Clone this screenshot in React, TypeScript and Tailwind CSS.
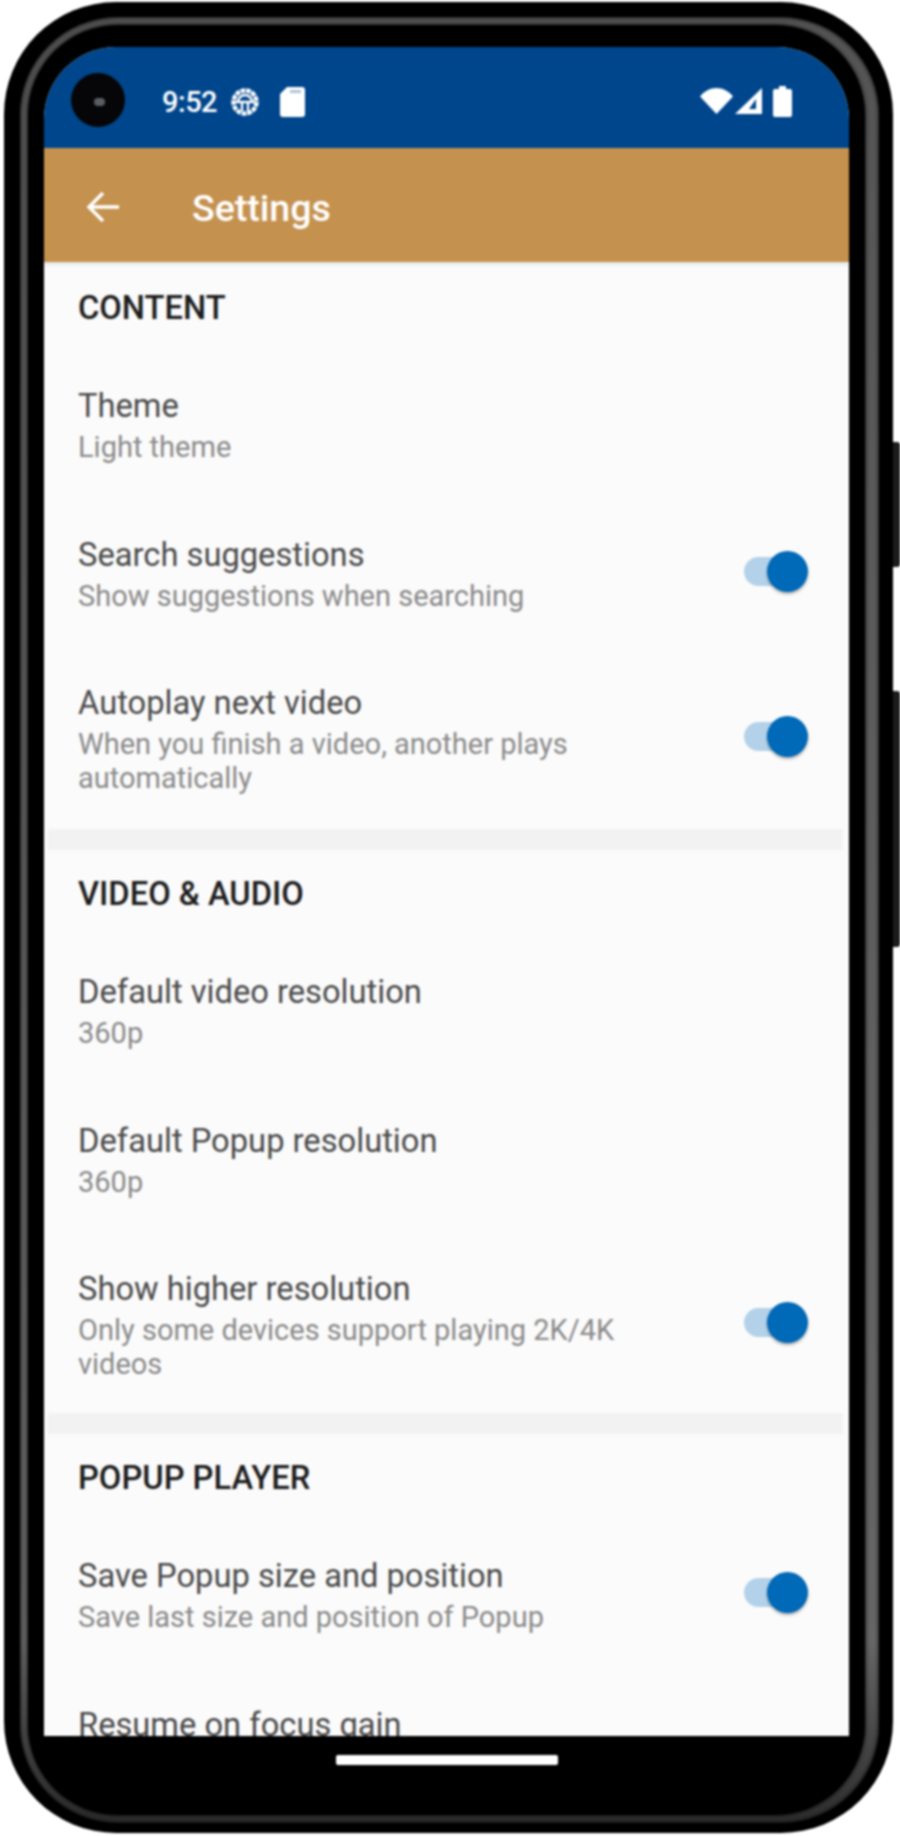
const font = "font-['Roboto','Liberation_Sans',sans-serif]";

function StatusBar() {
  return (
    <div className="flex h-[101px] shrink-0 items-center bg-[#00468c] pl-[27px] pr-[57px] text-white">
      <div className="mt-[5px] flex h-[54px] w-[54px] items-center justify-center rounded-full bg-[#060608]">
        <div className="ml-[2px] mt-[4px] h-[8px] w-[11px] rounded-full bg-[#5a5d62]" />
      </div>
      <span className="ml-[37px] mt-[10px] text-[29px] font-medium leading-none tracking-[-0.5px]">9:52</span>
      <svg className="ml-[13px] mt-[9px]" width="30" height="30" viewBox="0 0 30 30" fill="none">
        <circle cx="15" cy="15" r="11.5" stroke="white" strokeWidth="4.4" strokeDasharray="4.6 0.9" />
        <path d="M5 15h20M8 15a7 7 0 0 1 14 0M12 16v8M18 16v8" stroke="white" strokeWidth="2.4" />
      </svg>
      <svg className="ml-[20px] mt-[9px]" width="25" height="30" viewBox="0 0 25 30" fill="white">
        <path d="M7 0h15a3 3 0 0 1 3 3v24a3 3 0 0 1-3 3H3a3 3 0 0 1-3-3V7z" />
        <rect x="10" y="3" width="11" height="3" fill="#b4c2d6" />
      </svg>
      <div className="ml-auto mt-[7px] flex items-center">
        <svg width="33" height="26" viewBox="0 0 33 26" fill="white">
          <path d="M16.5 26 0 8.5C4.5 3 10 0 16.5 0S28.500 3 33 8.500z" />
        </svg>
        <svg className="ml-[2px]" width="27" height="26" viewBox="0 0 27 26" fill="white">
          <path fillRule="evenodd" d="M0 26 27 0v26zM21 11l-7 10h7z" />
        </svg>
        <svg className="ml-[11px]" width="19" height="31" viewBox="0 0 19 31" fill="white">
          <path d="M6 0h7v3h4a2 2 0 0 1 2 2v24a2 2 0 0 1-2 2H2a2 2 0 0 1-2-2V5a2 2 0 0 1 2-2h4z" />
        </svg>
      </div>
    </div>
  );
}

function Toolbar() {
  return (
    <div className="relative z-10 flex h-[114px] shrink-0 items-center bg-[#c4914f] pl-[42px] shadow-[0_2px_4px_rgba(0,0,0,0.12)]">
      <svg className="mt-[3px]" width="34" height="34" viewBox="0 0 34 34" fill="none">
        <path d="M33 17H3M17 3 3 17l14 14" stroke="white" strokeWidth="3.4" />
      </svg>
      <h1 className="ml-[72px] mt-[7px] text-[37.5px] font-medium leading-none text-white">Settings</h1>
    </div>
  );
}

function Toggle() {
  return (
    <div className="relative -mt-[4px] h-[41px] w-[64px] shrink-0">
      <div className="absolute left-0 top-[6px] h-[29px] w-[51px] rounded-full bg-[#b3d2e9]" />
      <div className="absolute right-0 top-0 h-[41px] w-[41px] rounded-full bg-[#0069b8] shadow-[0_2px_3px_rgba(0,0,0,0.3)]" />
    </div>
  );
}

function Row({ title, sub, on }: { title: string; sub?: string; on?: boolean }) {
  return (
    <div className="min-h-[148.5px] pb-[32px] pl-[34px] pr-[41px] pt-[31px]">
      <div className="flex items-center">
        <div className="flex-1 pr-[64px]">
          <p className="text-[32.7px] leading-[42px] text-[#4a4a4a]">{title}</p>
          {sub && <p className="mt-[3px] text-[29px] leading-[34px] text-[#8a8a8a]">{sub}</p>}
        </div>
        {on && <Toggle />}
      </div>
    </div>
  );
}

function SectionTitle({ children }: { children: string }) {
  return (
    <h2 className="h-[90px] pl-[34px] pt-[28px] text-[32.7px] font-medium leading-[32px] text-[#1c1c1c]">
      {children}
    </h2>
  );
}

function Divider() {
  return <div className="ml-[4px] mr-[6px] h-[21px] bg-[#f2f2f2]" />;
}

export default function App() {
  return (
    <div className={`h-[1836px] w-[900px] overflow-hidden bg-white ${font}`}>
      <div className="relative ml-[4px] mt-[2px] h-[1831px] w-[889px] rounded-[112px] bg-black pb-[10px] pl-[16px] pr-[14px] pt-[15px] blur-[0.8px]">
        {/* side buttons */}
        <div className="absolute -right-[7px] top-[440px] h-[125px] w-[7px] rounded-r-[3px] bg-[#1c1c1c]" />
        <div className="absolute -right-[7px] top-[689px] h-[256px] w-[7px] rounded-r-[3px] bg-[#1c1c1c]" />
        <div className="h-full rounded-[98px] bg-linear-to-b from-[#555555] via-[#666666] via-90% to-[#2e2e2e] pb-[8px] pl-[8px] pr-[14px] pt-[8px] shadow-[inset_0_0_4px_#000]">
          <div className="h-full rounded-[90px] bg-black px-[16px] pt-[22px] shadow-[0_0_4px_#000]">
            <div className="flex h-[1689px] flex-col overflow-hidden rounded-t-[72px] bg-[#fbfbfb]">
              <StatusBar />
              <Toolbar />
              <div className="shrink-0 pt-[2px]">
                <SectionTitle>CONTENT</SectionTitle>
                <Row title="Theme" sub="Light theme" />
                <Row title="Search suggestions" sub="Show suggestions when searching" on />
                <Row title="Autoplay next video" sub="When you finish a video, another plays automatically" on />
                <div className="h-[2px]" />
                <Divider />
                <SectionTitle>VIDEO &amp; AUDIO</SectionTitle>
                <Row title="Default video resolution" sub="360p" />
                <Row title="Default Popup resolution" sub="360p" />
                <Row title="Show higher resolution" sub="Only some devices support playing 2K/4K videos" on />
                <Divider />
                <SectionTitle>POPUP PLAYER</SectionTitle>
                <Row title="Save Popup size and position" sub="Save last size and position of Popup" on />
                <Row title="Resume on focus gain" />
              </div>
            </div>
            <div className="mx-auto mt-[19px] h-[10px] w-[222px] rounded-[2px] bg-white" />
          </div>
        </div>
      </div>
    </div>
  );
}
